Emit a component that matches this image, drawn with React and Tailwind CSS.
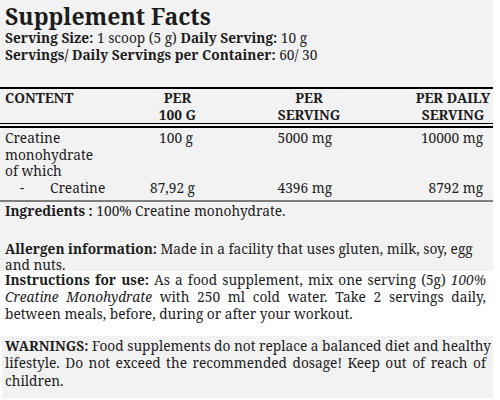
const rows = [
  { name: ['Creatine', 'monohydrate', 'of which'], per100: '100 g', serving: '5000 mg', daily: '10000 mg' },
  { sub: 'Creatine', per100: '87,92 g', serving: '4396 mg', daily: '8792 mg' },
];

function Just({ children }) {
  // one justified line, stretched edge to edge
  return <div className="whitespace-nowrap text-justify [text-align-last:justify]">{children}</div>;
}

export default function App() {
  return (
    <div className="h-[400px] w-[500px] overflow-hidden bg-white font-['Noto_Serif',serif] text-[13.7px] text-[#1c1c1c]">
      <div className="w-[493px] bg-[#f2f2f2]">
        <h1 className="pl-[5px] pt-[3px] text-[23px] font-bold leading-[26px]">Supplement Facts</h1>
        <div className="pl-[5px] leading-[17px]">
          <p>
            <b>Serving Size:</b> 1 scoop (5 g) <b>Daily Serving:</b> 10 g
          </p>
          <p>
            <b>Servings/ Daily Servings per Container:</b> 60/ 30
          </p>
        </div>

        <div className="mt-[24px] h-[2px] bg-black" />

        <div className="grid grid-cols-[150px_55px_208px_80px] font-bold leading-[17px]">
          <div className="pl-[5px]">CONTENT</div>
          <div className="text-center">PER<br />100 G</div>
          <div className="text-center">PER<br />SERVING</div>
          <div className="text-center whitespace-nowrap">PER DAILY<br />SERVING</div>
        </div>
        <div className="h-px bg-black" />
        <div className="mt-[2px] h-[2px] bg-black" />

        <div className="pt-[2px] pb-[3px] leading-[16.7px]">
          {rows.map((r, i) => (
            <div key={i} className="grid grid-cols-[150px_55px_208px_80px]">
              <div className="pl-[5px]">
                {r.name ? (
                  r.name.map((n) => <div key={n}>{n}</div>)
                ) : (
                  <div className="flex">
                    <span className="w-[45px] pl-[15px]">-</span>
                    <span>{r.sub}</span>
                  </div>
                )}
              </div>
              <div className="whitespace-nowrap pr-[12px] text-right">{r.per100}</div>
              <div className="pr-[81px] text-right">{r.serving}</div>
              <div className="pr-[10px] text-right">{r.daily}</div>
            </div>
          ))}
        </div>
        <div className="h-[2px] bg-[#7f7f7f]" />

        <div className="pl-[5px] leading-[17px]">
          <p>
            <b>Ingredients :</b> 100% Creatine monohydrate.
          </p>
        </div>
        <div className="mt-[22px] h-[30px] pl-[5px] leading-[16px]">
          <p>
            <b>Allergen information:</b> Made in a facility that uses gluten, milk, soy, egg
            <br />
            and nuts.
          </p>
        </div>
      </div>

      <div className="w-[493px] bg-white pt-0 pb-[14px] pl-[5px] pr-[7px] leading-[17px]">
        <Just>
          <b>Instructions for use:</b> As a food supplement, mix one serving (5g) <i>100%</i>
        </Just>
        <Just>
          <i>Creatine Monohydrate</i> with 250 ml cold water. Take 2 servings daily,
        </Just>
        <div>between meals, before, during or after your workout.</div>
      </div>

      <div className="ml-[2px] h-[62px] w-[491px] bg-[#f2f2f2] pt-[1px] pl-[3px] pr-[7px] leading-[17.5px]">
        <Just>
          <b>WARNINGS:</b> Food supplements do not replace a balanced diet and healthy
        </Just>
        <Just>lifestyle. Do not exceed the recommended dosage! Keep out of reach of</Just>
        <div>children.</div>
      </div>
    </div>
  );
}
